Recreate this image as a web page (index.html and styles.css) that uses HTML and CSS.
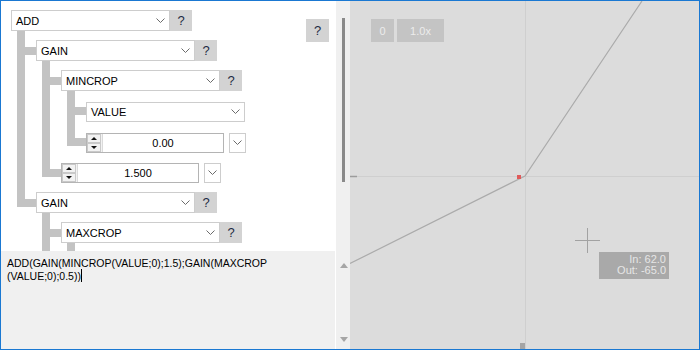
FILE: index.html
```html
<!DOCTYPE html>
<html lang="en">
<head>
    <meta charset="UTF-8">
    <title>Curve Editor</title>
    <link rel="stylesheet" href="styles.css">
</head>
<body>
    <div class="window">
        <div class="tree-pane">
            <div class="tree">
                <div class="node">
                    <div class="row">
                        <div class="pick">ADD<svg class="chev" width="9" height="5"><polyline points="0.5,0.5 4.5,4.5 8.5,0.5"/></svg></div>
                        <div class="help">?</div>
                    </div>
                    <div class="kids">
                        <div class="node">
                            <div class="row">
                                <div class="pick">GAIN<svg class="chev" width="9" height="5"><polyline points="0.5,0.5 4.5,4.5 8.5,0.5"/></svg></div>
                                <div class="help">?</div>
                            </div>
                            <div class="kids">
                                <div class="node">
                                    <div class="row">
                                        <div class="pick">MINCROP<svg class="chev" width="9" height="5"><polyline points="0.5,0.5 4.5,4.5 8.5,0.5"/></svg></div>
                                        <div class="help">?</div>
                                    </div>
                                    <div class="kids">
                                        <div class="node">
                                            <div class="row">
                                                <div class="pick slim">VALUE<svg class="chev" width="9" height="5"><polyline points="0.5,0.5 4.5,4.5 8.5,0.5"/></svg></div>
                                            </div>
                                        </div>
                                        <div class="node">
                                            <div class="row">
                                                <div class="spin">
                                                    <div class="spin-btns"><span class="up"></span><span class="down"></span></div>
                                                    <div class="spin-val">0.00</div>
                                                </div>
                                                <div class="drop"><svg class="chev" width="9" height="5"><polyline points="0.5,0.5 4.5,4.5 8.5,0.5"/></svg></div>
                                            </div>
                                        </div>
                                    </div>
                                </div>
                                <div class="node">
                                    <div class="row">
                                        <div class="spin">
                                            <div class="spin-btns"><span class="up"></span><span class="down"></span></div>
                                            <div class="spin-val">1.500</div>
                                        </div>
                                        <div class="drop"><svg class="chev" width="9" height="5"><polyline points="0.5,0.5 4.5,4.5 8.5,0.5"/></svg></div>
                                    </div>
                                </div>
                            </div>
                        </div>
                        <div class="node">
                            <div class="row">
                                <div class="pick">GAIN<svg class="chev" width="9" height="5"><polyline points="0.5,0.5 4.5,4.5 8.5,0.5"/></svg></div>
                                <div class="help">?</div>
                            </div>
                            <div class="kids">
                                <div class="node">
                                    <div class="row">
                                        <div class="pick">MAXCROP<svg class="chev" width="9" height="5"><polyline points="0.5,0.5 4.5,4.5 8.5,0.5"/></svg></div>
                                        <div class="help">?</div>
                                    </div>
                                    <div class="kids">
                                        <div class="node">
                                            <div class="row">
                                                <div class="pick slim"></div>
                                            </div>
                                        </div>
                                    </div>
                                </div>
                                <div class="node">
                                    <div class="row"></div>
                                </div>
                            </div>
                        </div>
                    </div>
                </div>
            </div>
            <div class="help corner">?</div>
        </div>
        <div class="vscroll"><div class="thumb"></div></div>

        <div class="formula">ADD(GAIN(MINCROP(VALUE;0);1.5);GAIN(MAXCROP<br>(VALUE;0);0.5))<span class="caret"></span></div>
        <div class="vscroll arrows">
            <svg width="8" height="5"><polygon points="0,5 4,0 8,5"/></svg>
            <svg width="8" height="5"><polygon points="0,0 4,5 8,0"/></svg>
        </div>

        <div class="plot">
            <svg class="graph" width="349" height="348">
                <line class="grid" x1="175.5" y1="0" x2="175.5" y2="348"/>
                <line class="grid" x1="0" y1="175.5" x2="349" y2="175.5"/>
                <line class="mark" x1="0" y1="175.5" x2="7" y2="175.5"/>
                <rect class="mark-box" x="170" y="342" width="5" height="6"/>
                <polyline class="curve" points="0,262.5 175,175 292,0"/>
                <rect class="point" x="167" y="174" width="4" height="4"/>
                <line class="cross" x1="225" y1="239.5" x2="250" y2="239.5"/>
                <line class="cross" x1="237.5" y1="227" x2="237.5" y2="252"/>
            </svg>
            <div class="zoom-bar">
                <div class="zbtn">0</div>
                <div class="zbtn wide">1.0x</div>
            </div>
            <div class="readout">In: 62.0<br>Out: -65.0</div>
        </div>
    </div>
</body>
</html>
```

FILE: styles.css
```css
body {
    margin: 0;
    font-family: "Liberation Sans", Arial, sans-serif;
    font-size: 11px;
    color: #000;
}
.window {
    width: 700px;
    height: 350px;
    box-sizing: border-box;
    border: 1px solid #1a78d2;
    display: grid;
    grid-template-columns: 335px 14px 1fr;
    grid-template-rows: 250px 1fr;
    background: #f0f0f0;
}
.tree-pane {
    position: relative;
    overflow: hidden;
    background: #fff;
}
.tree {
    padding: 9px 0 0 10px;
}
.row {
    display: flex;
    align-items: center;
    height: 21px;
}
.kids {
    margin-left: 25px;
}
.kids > .node {
    position: relative;
    padding-top: 9px;
}
.kids .kids .kids > .node {
    padding-top: 10px;
}
.kids > .node::before {
    content: "";
    position: absolute;
    left: -19px;
    top: 0;
    bottom: 0;
    width: 8px;
    background: #c3c3c3;
}
.kids > .node:last-child::before {
    bottom: auto;
    height: 24px;
}
.kids > .node::after {
    content: "";
    position: absolute;
    left: -11px;
    top: 16px;
    width: 11px;
    height: 8px;
    background: #c3c3c3;
}
.pick {
    width: 159px;
    height: 21px;
    box-sizing: border-box;
    border: 1px solid #cdcdcd;
    background: #fff;
    display: flex;
    align-items: center;
    justify-content: space-between;
    padding: 0 4px 0 4px;
}
.pick.slim {
    height: 20px;
}
.chev polyline {
    fill: none;
    stroke: #6b6b6b;
    stroke-width: 1;
}
.help {
    width: 22px;
    height: 21px;
    background: #d3d3d3;
    color: #1e2c44;
    font-size: 13px;
    display: flex;
    align-items: center;
    justify-content: center;
}
.help.corner {
    position: absolute;
    top: 18px;
    left: 305px;
    width: 23px;
    height: 23px;
}
.spin {
    width: 138px;
    height: 20px;
    box-sizing: border-box;
    border: 1px solid #b4b4b4;
    background: #fff;
    display: flex;
}
.spin-btns {
    width: 15px;
    display: flex;
    flex-direction: column;
    border-right: 1px solid #dadada;
    background: #f2f2f2;
}
.spin-btns span {
    flex: 1;
    position: relative;
    border: 1px solid #c9c9c9;
    margin: 0 1px 0 0;
}
.spin-btns span::after {
    content: "";
    position: absolute;
    left: 3px;
    top: 2px;
    border-left: 3px solid transparent;
    border-right: 3px solid transparent;
}
.spin-btns .up::after {
    border-bottom: 3px solid #111;
}
.spin-btns .down::after {
    border-top: 3px solid #111;
}
.spin-val {
    flex: 1;
    text-align: center;
    line-height: 18px;
}
.drop {
    width: 17px;
    height: 20px;
    margin-left: 5px;
    box-sizing: border-box;
    border: 1px solid #cdcdcd;
    background: #fff;
    display: flex;
    align-items: center;
    justify-content: center;
}
.vscroll {
    background: #f0f0f0;
}
.thumb {
    margin: 17px 0 0 6px;
    width: 3px;
    height: 164px;
    background: #8a8a8a;
}
.formula {
    padding: 6px 6px 4px;
    font-size: 10.5px;
    line-height: 12px;
    border-right: 1px solid #fff;
}
.caret {
    display: inline-block;
    width: 1px;
    height: 13px;
    background: #000;
    vertical-align: -2px;
}
.arrows {
    display: flex;
    flex-direction: column;
    align-items: center;
    justify-content: space-between;
    padding: 12px 0 7px 1px;
}
.arrows polygon {
    fill: #a6a6a6;
}
.plot {
    grid-column: 3;
    grid-row: 1 / span 2;
    position: relative;
    background: #dcdcdc;
    overflow: hidden;
}
.graph {
    display: block;
}
.grid {
    stroke: #cfcfcf;
    stroke-width: 1;
}
.mark {
    stroke: #9c9c9c;
    stroke-width: 1.5;
}
.mark-box {
    fill: #a4a4a4;
}
.curve {
    fill: none;
    stroke: #ababab;
    stroke-width: 1.2;
}
.point {
    fill: #e05a5a;
}
.cross {
    stroke: #a2a2a2;
    stroke-width: 1;
}
.zoom-bar {
    position: absolute;
    top: 18px;
    left: 21px;
    display: flex;
    gap: 3px;
}
.zbtn {
    width: 23px;
    height: 23px;
    background: #c4c4c4;
    color: #ececec;
    font-size: 11px;
    display: flex;
    align-items: center;
    justify-content: center;
}
.zbtn.wide {
    width: 47px;
}
.readout {
    position: absolute;
    left: 249px;
    top: 251px;
    width: 70px;
    height: 27px;
    box-sizing: border-box;
    padding: 2px 3px 0 0;
    background: #a9a9a9;
    color: #e6e6e6;
    text-align: right;
    line-height: 11px;
    font-size: 11px;
}
```
